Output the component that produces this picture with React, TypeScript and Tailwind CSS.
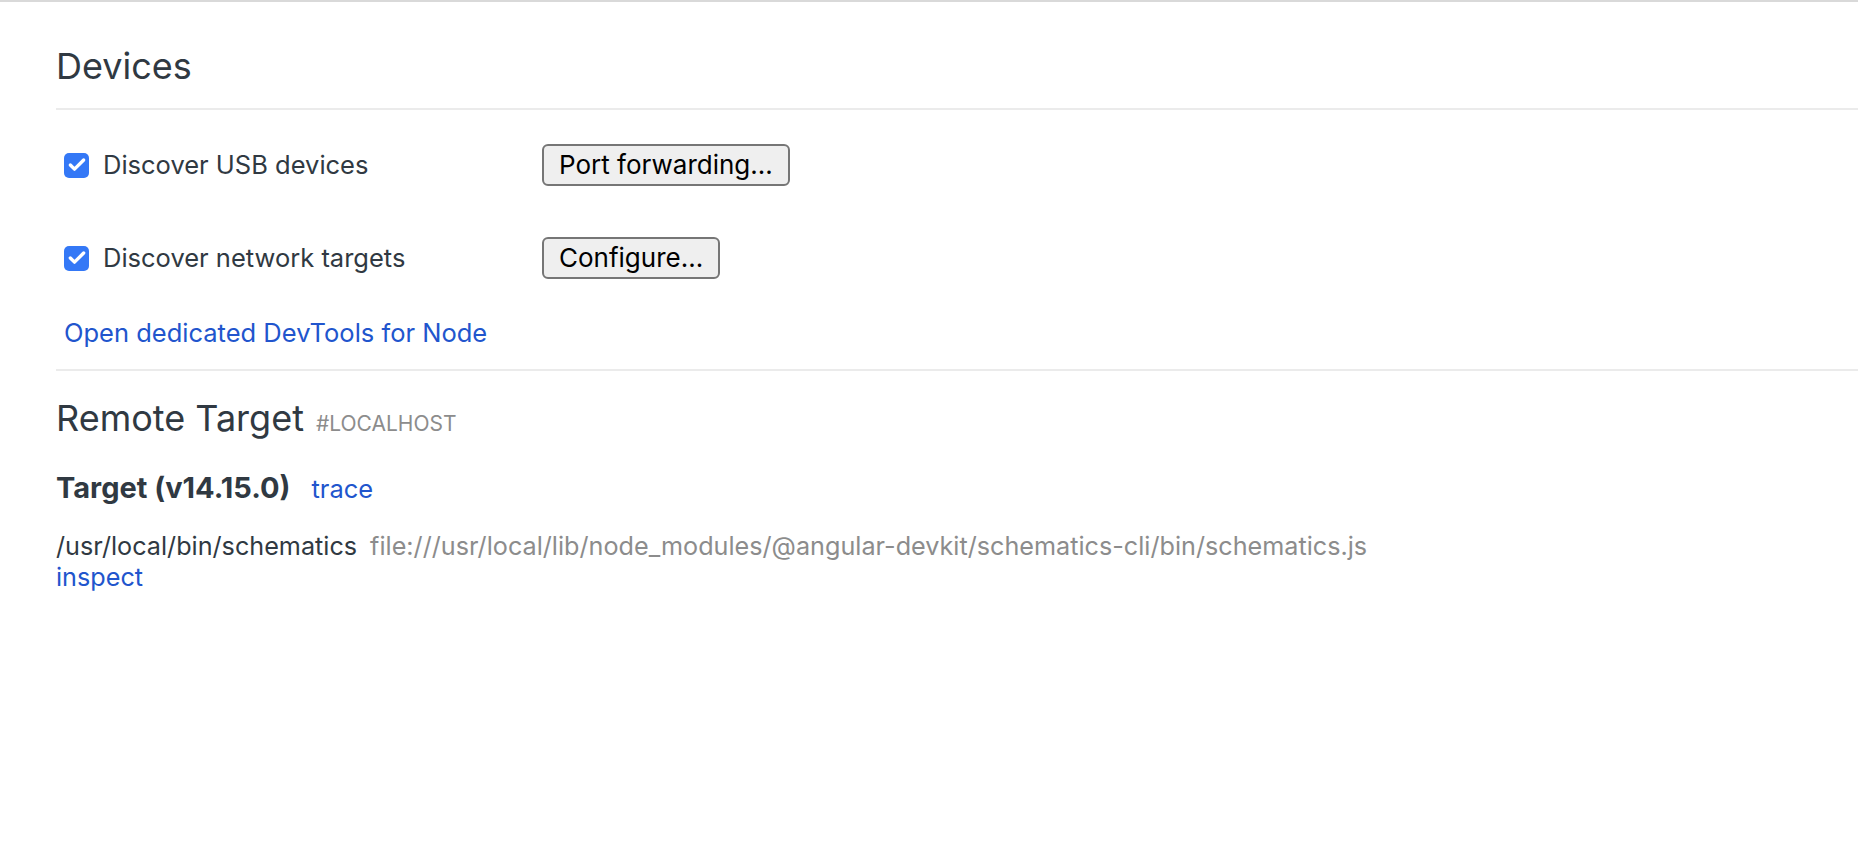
import { Check } from 'lucide-react';

function Checkbox() {
    return (
        <span className="flex h-[25px] w-[25px] items-center justify-center rounded-[5px] bg-[#3478f6]">
            <Check className="text-white" size={20} strokeWidth={4} />
        </span>
    );
}

function NativeButton({ label }: { label: string }) {
    return (
        <button className="h-[42px] rounded-[6px] border-2 border-[#767676] bg-[#efefef] px-[15px] text-[26px] leading-none text-black">
            {label}
        </button>
    );
}

function OptionRow({ label, action }: { label: string; action: string }) {
    return (
        <div className="flex h-[42px] items-center">
            <div className="flex w-[478px] items-center gap-[14px]">
                <Checkbox />
                <span className="text-[25.5px]">{label}</span>
            </div>
            <NativeButton label={action} />
        </div>
    );
}

export default function App() {
    return (
        <div className="min-h-screen border-t-2 border-[#d9d9d9] bg-white font-['Inter',sans-serif] text-[#303942]">
            <div className="pl-[56px]">
                <h1 className="mt-[42px] text-[36px] leading-[44px]">Devices</h1>
                <div className="mt-[20px] border-t-2 border-[#ebebeb]" />

                <div className="pl-[8px]">
                    <div className="mt-[34px]">
                        <OptionRow label="Discover USB devices" action="Port forwarding..." />
                    </div>
                    <div className="mt-[51px]">
                        <OptionRow label="Discover network targets" action="Configure..." />
                    </div>
                    <a className="mt-[38px] block text-[25.5px] leading-[32px] text-[#2155cd]">
                        Open dedicated DevTools for Node
                    </a>
                </div>

                <div className="mt-[20px] border-t-2 border-[#ebebeb]" />

                <div className="mt-[25px] flex items-baseline gap-[12px]">
                    <h2 className="text-[36px] leading-[44px]">Remote Target</h2>
                    <span className="text-[21px] text-[#8c8c8c]">#LOCALHOST</span>
                </div>

                <div className="mt-[31px] flex items-baseline gap-[21px] leading-[34px]">
                    <span className="text-[29px] font-bold">Target (v14.15.0)</span>
                    <a className="text-[25.5px] text-[#2155cd]">trace</a>
                </div>

                <div className="mt-[25px] text-[25.2px] leading-[31px]">
                    <div className="flex items-baseline gap-[13px]">
                        <span className="text-[#303942]">/usr/local/bin/schematics</span>
                        <span className="text-[#8c8c8c]">
                            file:///usr/local/lib/node_modules/@angular-devkit/schematics-cli/bin/schematics.js
                        </span>
                    </div>
                    <a className="block text-[#2155cd]">inspect</a>
                </div>
            </div>
        </div>
    );
}
